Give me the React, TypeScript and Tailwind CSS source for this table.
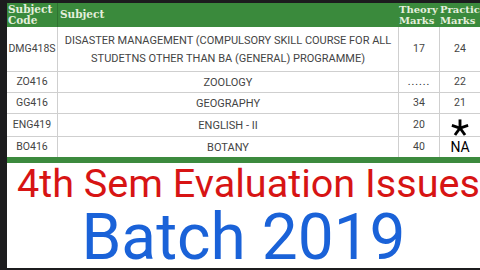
export default function App() {
  const rows = [
    { code: 'DMG418S', subject: ['DISASTER MANAGEMENT (COMPULSORY SKILL COURSE FOR ALL', 'STUDETNS OTHER THAN BA (GENERAL) PROGRAMME)'], theory: '17', practical: '24', h: 'h-[44px]' },
    { code: 'ZO416', subject: ['ZOOLOGY'], theory: 'dots', practical: '22', h: 'h-[21px]' },
    { code: 'GG416', subject: ['GEOGRAPHY'], theory: '34', practical: '21', h: 'h-[21px]' },
    { code: 'ENG419', subject: ['ENGLISH - II'], theory: '20', practical: 'star', h: 'h-[23px]' },
    { code: 'BO416', subject: ['BOTANY'], theory: '40', practical: 'NA', h: 'h-[21px]' },
  ]

  return (
    <div className="flex h-[270px] w-[480px] overflow-hidden bg-[#1c1c1e] pb-[2px] pl-[7px] pt-[3px]">
      <div className="flex flex-1 flex-col overflow-hidden bg-white">
        {/* tabela de notas */}
        <div className="grid grid-cols-[50px_341px_41px_41px] font-['Roboto',sans-serif] text-[10.5px] text-[#444]">
          <div className="flex h-[24px] flex-col justify-center bg-[#3a8a3c] pl-[1px] font-['DejaVu_Serif',serif] text-[10.5px] font-bold leading-[11px] text-[#e4efdc]">
            <span>Subject</span>
            <span>Code</span>
          </div>
          <div className="flex h-[24px] items-center border-l border-[#2f7331] bg-[#3a8a3c] pl-[2px] font-['DejaVu_Serif',serif] text-[10.5px] font-bold text-[#e4efdc]">
            Subject
          </div>
          <div className="flex h-[24px] flex-col justify-center bg-[#3a8a3c] pl-[1px] font-['DejaVu_Serif',serif] text-[10px] font-bold leading-[11px] text-[#e4efdc]">
            <span>Theory</span>
            <span>Marks</span>
          </div>
          <div className="flex h-[24px] flex-col justify-center overflow-hidden bg-[#3a8a3c] pl-[1px] font-['DejaVu_Serif',serif] text-[10px] font-bold leading-[11px] whitespace-nowrap text-[#e4efdc]">
            <span>Practical</span>
            <span>Marks</span>
          </div>

          {rows.map((r, i) => (
            <div key={r.code} className="contents">
              <div className={`flex ${r.h} items-center justify-center ${i > 0 ? 'border-t' : ''} border-[#cfcfcf]`}>
                {r.code}
              </div>
              <div className={`flex ${r.h} flex-col items-center justify-center gap-[7px] border-l ${i > 0 ? 'border-t' : ''} border-[#cfcfcf] text-[11px] leading-none`}>
                {r.subject.map((s) => (
                  <span key={s} className="whitespace-nowrap">{s}</span>
                ))}
              </div>
              <div className={`flex ${r.h} items-center justify-center border-l ${i > 0 ? 'border-t' : ''} border-[#cfcfcf]`}>
                {r.theory === 'dots' ? (
                  <span className="tracking-[1px] text-[#222]">......</span>
                ) : (
                  r.theory
                )}
              </div>
              <div className={`flex ${r.h} items-center justify-center border-l ${i > 0 ? 'border-t' : ''} border-[#cfcfcf]`}>
                {r.practical === 'star' ? (
                  <svg width="18" height="18" viewBox="-10 -10 20 20" className="mt-[6px]" stroke="black" strokeWidth="3.2" strokeLinecap="butt">
                    <line x1="0" y1="0" x2="0" y2="-9.5" />
                    <line x1="0" y1="0" x2="9" y2="-2.8" />
                    <line x1="0" y1="0" x2="-9" y2="-2.8" />
                    <line x1="0" y1="0" x2="5.6" y2="7.8" />
                    <line x1="0" y1="0" x2="-5.6" y2="7.8" />
                  </svg>
                ) : r.practical === 'NA' ? (
                  <span className="text-[14px] text-black">NA</span>
                ) : (
                  r.practical
                )}
              </div>
            </div>
          ))}
        </div>
        <div className="h-[7px] bg-[#3c8a3e]" />

        {/* titulo */}
        <div className="pl-[10px] font-['Roboto',sans-serif] text-[39.6px] leading-[42px] whitespace-nowrap text-[#d71414]">
          4th Sem Evaluation Issues
        </div>
        <div className="mt-[3px] text-center font-['Roboto',sans-serif] text-[64px] leading-[60px] text-[#1a62d8]">
          Batch 2019
        </div>
      </div>
    </div>
  )
}
